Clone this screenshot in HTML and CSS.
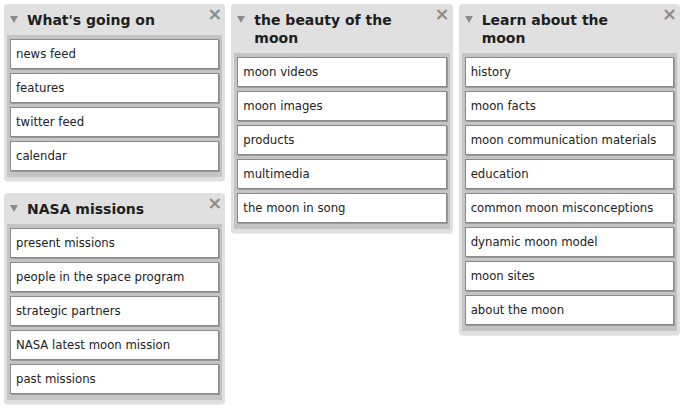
FILE: index.html
```html
<!DOCTYPE html>
<html>
<head>
<meta charset="utf-8">
<link rel="stylesheet" href="styles.css">
</head>
<body>
<div class="board">
  <div class="column">
    <div class="panel">
      <div class="head"><span class="tri"></span><h2>What's going on</h2><span class="close">×</span></div>
      <ul class="list">
        <li>news feed</li>
        <li>features</li>
        <li>twitter feed</li>
        <li>calendar</li>
      </ul>
    </div>
    <div class="panel">
      <div class="head"><span class="tri"></span><h2>NASA missions</h2><span class="close">×</span></div>
      <ul class="list">
        <li>present missions</li>
        <li>people in the space program</li>
        <li>strategic partners</li>
        <li>NASA latest moon mission</li>
        <li>past missions</li>
      </ul>
    </div>
  </div>
  <div class="column">
    <div class="panel">
      <div class="head"><span class="tri"></span><h2>the beauty of the moon</h2><span class="close">×</span></div>
      <ul class="list">
        <li>moon videos</li>
        <li>moon images</li>
        <li>products</li>
        <li>multimedia</li>
        <li>the moon in song</li>
      </ul>
    </div>
  </div>
  <div class="column">
    <div class="panel">
      <div class="head"><span class="tri"></span><h2>Learn about the moon</h2><span class="close">×</span></div>
      <ul class="list">
        <li>history</li>
        <li>moon facts</li>
        <li>moon communication materials</li>
        <li>education</li>
        <li>common moon misconceptions</li>
        <li>dynamic moon model</li>
        <li>moon sites</li>
        <li>about the moon</li>
      </ul>
    </div>
  </div>
</div>
</body>
</html>
```
FILE: styles.css
```css
* { box-sizing: border-box; }
html, body { margin: 0; padding: 0; background: #fff; }
body { font-family: "DejaVu Sans", Verdana, sans-serif; color: #222; }
.board {
  display: flex;
  align-items: flex-start;
  gap: 6px;
  padding: 4px;
}
.column {
  width: 222px;
  display: flex;
  flex-direction: column;
  gap: 12px;
}
.panel {
  position: relative;
  background: #e0e0e0;
  border-radius: 4px;
  padding: 0 3px 4px;
  box-shadow: 0 1px 0 #ececec;
}
.head {
  display: flex;
  align-items: flex-start;
  padding: 7px 24px 6px 2px;
  min-height: 31px;
}
.tri {
  flex: none;
  width: 0; height: 0;
  border-left: 4px solid transparent;
  border-right: 4px solid transparent;
  border-top: 7px solid #8c8c8c;
  margin: 5px 9px 0 1px;
}
h2 {
  margin: 0;
  font-size: 14px;
  line-height: 18px;
  font-weight: bold;
  color: #1e1e1e;
}
.close {
  position: absolute;
  top: 1px;
  right: 3px;
  font-size: 18px;
  line-height: 18px;
  font-weight: bold;
  color: #8c8c8c;
}
.list {
  list-style: none;
  margin: 0;
  padding: 4px 3px 6px;
  background: #c4c4c4;
  display: flex;
  flex-direction: column;
  gap: 4px;
}
.list li {
  height: 30px;
  background: #fff;
  border: 1px solid #8a8a8a;
  box-shadow: 1px 1px 0 #9a9a9a;
  padding: 0 5px;
  font-size: 11.7px;
  line-height: 28px;
  color: #222;
  white-space: nowrap;
}
```
